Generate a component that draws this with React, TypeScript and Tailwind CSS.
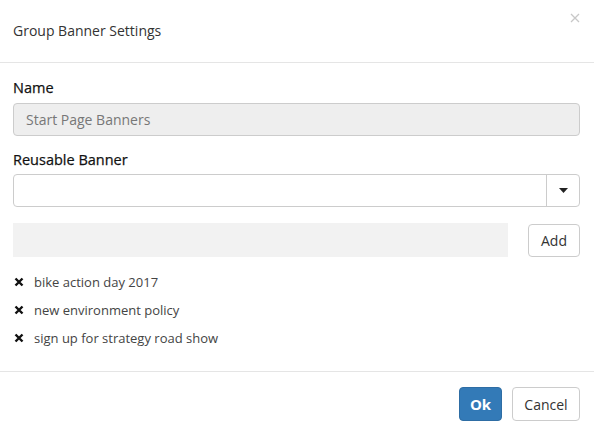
export default function App() {
  const banners = [
    "bike action day 2017",
    "new environment policy",
    "sign up for strategy road show",
  ];

  return (
    <div
      className="w-[594px] h-[434px] bg-white text-[#333] text-[14px] flex flex-col"
      style={{ fontFamily: '"Open Sans", "Liberation Sans", sans-serif' }}
    >
      {/* header */}
      <div className="h-[63px] flex items-center justify-between pl-[13px] pr-[14px] border-b border-[#e5e5e5] shrink-0">
        <h4 className="text-[14px] leading-5 mt-[-1px]">Group Banner Settings</h4>
        <button className="self-start mt-[13px] text-[#c4c4c4] text-[18px] leading-4">
          <svg width="10" height="10" viewBox="0 0 10 10">
            <path d="M1 1L9 9M9 1L1 9" stroke="#c8c8c8" strokeWidth="1.3" />
          </svg>
        </button>
      </div>

      {/* body */}
      <div className="flex-1 px-[13px] pt-[15px] pr-[14px]">
        <label className="block text-[14.5px] text-[#111] [-webkit-text-stroke:0.25px_#111] leading-5 mb-[5px]">Name</label>
        <input
          disabled
          value="Start Page Banners"
          className="w-full h-[33px] rounded-[4px] border border-[#ccc] bg-[#eee] px-[12px] text-[#777] text-[14px]"
          readOnly
        />

        <label className="block text-[14.5px] text-[#111] [-webkit-text-stroke:0.25px_#111] leading-5 mt-[14px] mb-[4px]">Reusable Banner</label>
        <div className="flex h-[33px] rounded-[4px] border border-[#ccc] bg-white">
          <div className="flex-1" />
          <div className="w-[33px] border-l border-[#ccc] flex items-center justify-center">
            <svg width="9" height="5" viewBox="0 0 9 5">
              <path d="M0 0H9L4.5 5Z" fill="#222" />
            </svg>
          </div>
        </div>

        <div className="flex items-center gap-[20px] mt-[16px]">
          <div className="flex-1 h-[34px] bg-[#f2f2f2]" />
          <button className="w-[52px] h-[33px] rounded-[4px] border border-[#ccc] bg-white text-[#333]">
            Add
          </button>
        </div>

        <ul className="mt-[11px]">
          {banners.map((b) => (
            <li key={b} className="h-[28px] flex items-center">
              <svg width="10" height="10" viewBox="0 0 10 10" className="ml-[1px] mr-[10px]">
                <path d="M1.5 1.5L8.5 8.5M8.5 1.5L1.5 8.5" stroke="#111" strokeWidth="2.4" />
              </svg>
              <span className="text-[13px] leading-5 text-[#444]">{b}</span>
            </li>
          ))}
        </ul>
      </div>

      {/* footer */}
      <div className="border-t border-[#e5e5e5] h-[63px] shrink-0 flex justify-end items-start pt-[15px] pr-[14px] gap-[10px]">
        <button className="w-[43px] h-[34px] rounded-[4px] bg-[#337ab7] border border-[#2e6da4] text-white font-bold text-[15px]">
          Ok
        </button>
        <button className="w-[68px] h-[34px] rounded-[4px] bg-white border border-[#ccc] text-[#333] text-[14px]">
          Cancel
        </button>
      </div>
    </div>
  );
}
